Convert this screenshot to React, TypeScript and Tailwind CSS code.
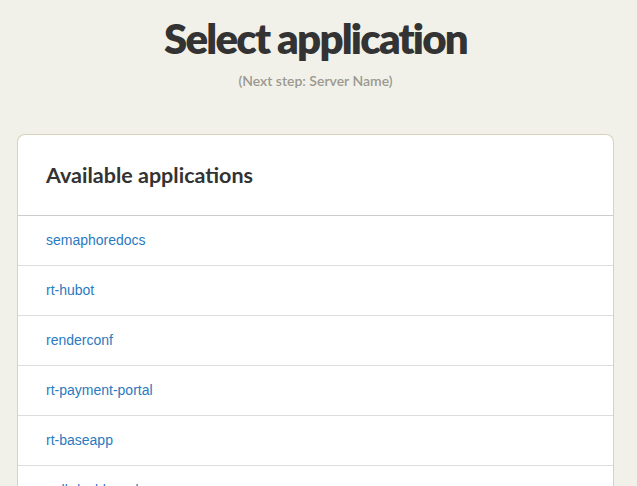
const apps = [
  "semaphoredocs",
  "rt-hubot",
  "renderconf",
  "rt-payment-portal",
  "rt-baseapp",
  "pull-dashboard",
];

export default function App() {
  return (
    <div className="h-screen overflow-hidden bg-[#f2f1e9] pl-[17px] pr-[23px] pt-[13px] font-['Lato',sans-serif]">
      <h1 className="text-center text-[42px] font-extrabold leading-[50px] tracking-[-1.8px] text-[#333]">
        Select application
      </h1>
      <p className="mt-[7px] text-center text-[14px] font-semibold text-[#9a9990]">(Next step: Server Name)</p>

      <div className="mt-[43px] overflow-hidden rounded-t-[8px] border border-b-0 border-[#d6d4bc] bg-white">
        <div className="flex h-[81px] items-center border-b border-[#ccc] px-[28px]">
          <h2 className="text-[21.5px] font-bold text-[#333]">Available applications</h2>
        </div>
        <ul>
          {apps.map((a) => (
            <li key={a} className="flex h-[50px] items-center border-b border-[#ddd] px-[28px]">
              <a href="#" className="font-['Liberation_Sans',Arial,sans-serif] text-[14px] text-[#2a7ac0]">
                {a}
              </a>
            </li>
          ))}
        </ul>
      </div>
    </div>
  );
}
